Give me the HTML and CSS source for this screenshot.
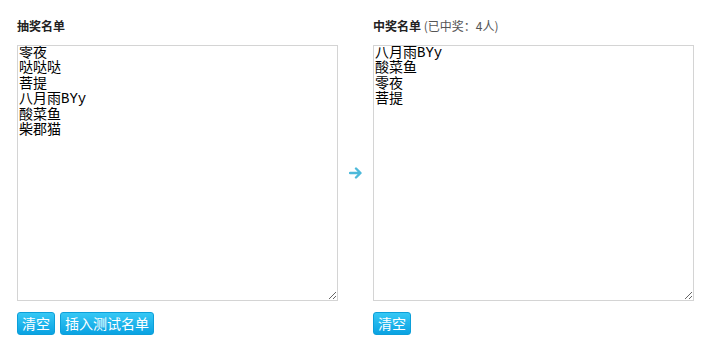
FILE: index.html
```html
<!DOCTYPE html>
<html lang="zh">
<head>
  <meta charset="UTF-8" />
  <title>抽奖</title>
  <link rel="stylesheet" href="styles.css">
</head>
<body>
  <div class="lottery">
    <h3 class="list-title">抽奖名单</h3>
    <div></div>
    <h3 class="list-title">中奖名单 <span class="count">(已中奖：4人)</span></h3>

    <textarea class="name-box" id="pool">零夜
哒哒哒
菩提
八月雨BYy
酸菜鱼
柴郡猫</textarea>
    <div class="arrow">
      <svg width="14" height="12" viewBox="0 0 14 12">
        <path d="M1 6h10M7 1.5l4.5 4.5L7 10.5" fill="none" stroke="#4db9da" stroke-width="2.4" stroke-linecap="round" stroke-linejoin="round"/>
      </svg>
    </div>
    <textarea class="name-box" id="winners">八月雨BYy
酸菜鱼
零夜
菩提</textarea>

    <div class="actions">
      <button class="btn">清空</button>
      <button class="btn">插入测试名单</button>
    </div>
    <div></div>
    <div class="actions">
      <button class="btn">清空</button>
    </div>
  </div>
</body>
</html>
```

FILE: styles.css
```css
body {
  margin: 0;
  background: #fff;
  font-family: "Noto Sans CJK SC", sans-serif;
  color: #222;
}

.lottery {
  display: grid;
  grid-template-columns: 321px 35px 321px;
  padding: 16px 0 0 17px;
}

.list-title {
  margin: 0 0 9px;
  font-size: 12px;
  line-height: 20px;
  font-weight: bold;
  color: #222;
}

.list-title .count {
  font-weight: normal;
  color: #555;
}

.name-box {
  display: block;
  box-sizing: border-box;
  width: 321px;
  height: 256px;
  margin: 0;
  padding: 0 1px;
  border: 1px solid #d4d4d4;
  font-family: "Liberation Mono", "Noto Sans CJK SC", monospace;
  font-size: 14px;
  line-height: 15.4px;
  color: #000;
  resize: both;
  outline: none;
}

.arrow {
  display: flex;
  align-items: center;
  justify-content: center;
}

.actions {
  display: flex;
  gap: 5px;
  margin-top: 11px;
}

.btn {
  height: 23px;
  padding: 0 4px;
  border: 1px solid #0c9fd9;
  border-radius: 3px;
  background: linear-gradient(#36c8f5, #0aa2e2);
  color: #fff;
  font-family: "Noto Sans CJK SC", sans-serif;
  font-size: 14px;
  line-height: 21px;
  cursor: pointer;
}
```
